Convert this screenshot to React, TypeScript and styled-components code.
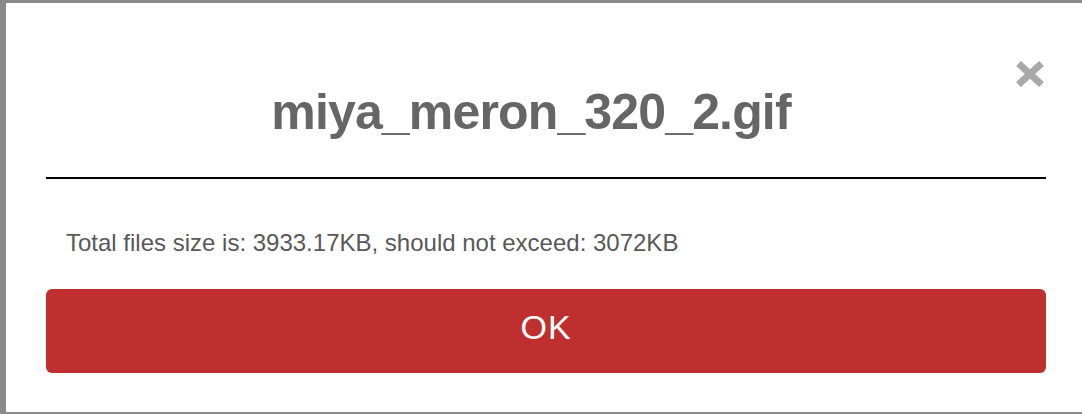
import React from "react";
import styled, { createGlobalStyle } from "styled-components";

const GlobalStyle = createGlobalStyle`
  html, body {
    margin: 0;
    padding: 0;
    background: #8a8a8a;
    overflow: hidden;
  }
  body {
    font-family: "Liberation Sans", Arial, Helvetica, sans-serif;
  }
`;

const Backdrop = styled.div`
  padding: 3px 0 0 6px;
  height: 414px;
  box-sizing: border-box;
`;

const Dialog = styled.div`
  background: #ffffff;
  height: 409px;
  box-sizing: border-box;
  padding: 58px 36px 0 40px;
  display: flex;
  flex-direction: column;
`;

const Header = styled.div`
  display: flex;
  align-items: flex-start;
`;

const Title = styled.h2`
  flex: 1;
  margin: 26px 0 0 0;
  text-align: center;
  font-size: 50px;
  line-height: 50px;
  letter-spacing: -0.85px;
  font-weight: 700;
  color: #666666;
`;

const CloseButton = styled.button`
  width: 30px;
  height: 26px;
  padding: 0;
  border: none;
  background: transparent;
  display: flex;
  align-items: center;
  justify-content: flex-start;
  cursor: pointer;
`;

const Divider = styled.hr`
  margin: 40px 0 0 0;
  height: 2px;
  border: none;
  background: #000000;
`;

const Message = styled.p`
  margin: 52px 0 0 0;
  padding-left: 20px;
  font-size: 24px;
  line-height: 24px;
  color: #585858;
`;

const OkButton = styled.button`
  margin-top: 34px;
  height: 84px;
  width: 100%;
  border: none;
  border-radius: 6px;
  background: #c02f30;
  color: #ffffff;
  font-family: "Liberation Sans", Arial, Helvetica, sans-serif;
  font-size: 34px;
  letter-spacing: 1px;
  display: flex;
  align-items: center;
  justify-content: center;
  padding: 0 0 8px 0;
  cursor: pointer;
`;

const CloseIcon = () => (
  <svg width="28" height="26" viewBox="0 0 28 26" aria-hidden="true">
    <line x1="2.5" y1="2.5" x2="25.5" y2="23.5" stroke="#a8a8a8" strokeWidth="7" />
    <line x1="25.5" y1="2.5" x2="2.5" y2="23.5" stroke="#a8a8a8" strokeWidth="7" />
  </svg>
);

export default function App() {
  return (
    <>
      <GlobalStyle />
      <Backdrop>
        <Dialog>
          <Header>
            <Title>miya_meron_320_2.gif</Title>
            <CloseButton aria-label="Close">
              <CloseIcon />
            </CloseButton>
          </Header>
          <Divider />
          <Message>Total files size is: 3933.17KB, should not exceed: 3072KB</Message>
          <OkButton>OK</OkButton>
        </Dialog>
      </Backdrop>
    </>
  );
}
